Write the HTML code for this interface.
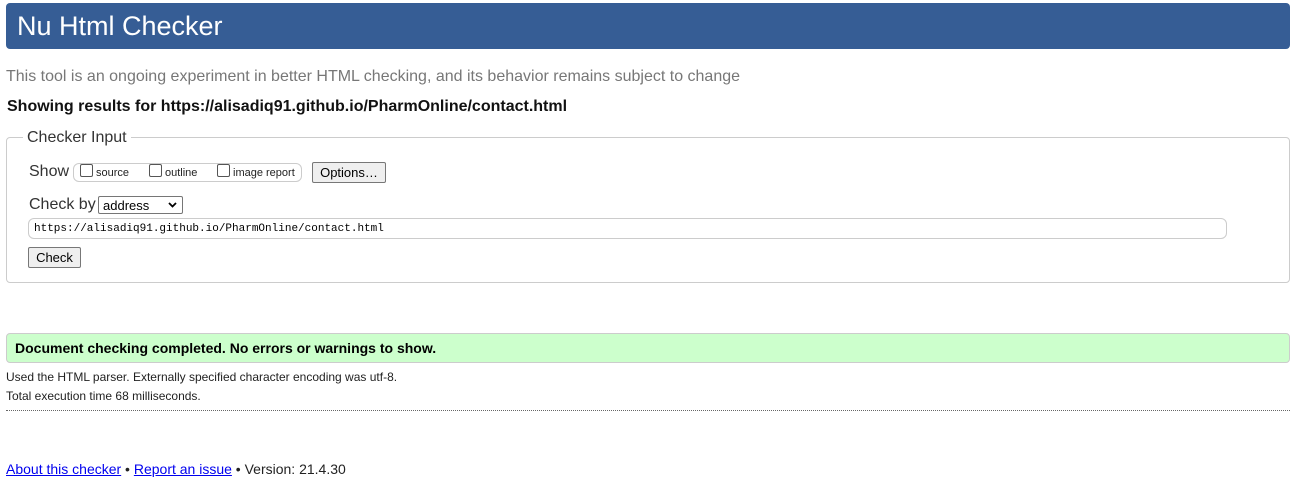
<!DOCTYPE html>
<html><head><meta charset="utf-8"><style>
body{margin:0;width:1300px;height:487px;background:#fff;font-family:"Liberation Sans",Arial,sans-serif;position:relative;overflow:hidden;color:#222}
.a{position:absolute;white-space:nowrap}
.cb{position:absolute;width:11px;height:11px;border:1px solid #555;border-radius:2px;background:#fff}
.btn{position:absolute;border:1px solid #777;border-radius:2px;background:#efefef;font-size:13px;text-align:center;box-sizing:border-box;color:#000}
</style></head><body>
<div class="a" style="left:6px;top:3px;width:1284px;height:46px;background:#365d95;border-radius:4px"></div>
<div class="a" style="left:17px;top:10px;font-size:27px;color:#fff;line-height:32px">Nu Html Checker</div>
<div class="a" style="left:6px;top:68px;font-size:16px;color:#777;line-height:18px">This tool is an ongoing experiment in better HTML checking, and its behavior remains subject to change</div>
<div class="a" style="left:7px;top:98px;font-size:16px;font-weight:bold;color:#111;line-height:18px">Showing results for https://alisadiq91.github.io/PharmOnline/contact.html</div>
<div class="a" style="left:6px;top:137px;width:1282px;height:144px;border:1px solid #ccc;border-radius:4px"></div>
<div class="a" style="left:23px;top:129px;padding:0 4px;background:#fff;font-size:16px;color:#333;line-height:18px">Checker Input</div>
<div class="a" style="left:29px;top:163px;font-size:16px;color:#333;line-height:18px">Show</div>
<div class="a" style="left:73px;top:163px;width:227px;height:17px;border:1px solid #ccc;border-radius:6px"></div>
<div class="cb" style="left:80px;top:164px"></div><div class="a" style="left:96px;top:167px;font-size:11px;line-height:12px">source</div>
<div class="cb" style="left:149px;top:164px"></div><div class="a" style="left:165px;top:167px;font-size:11px;line-height:12px">outline</div>
<div class="cb" style="left:217px;top:164px"></div><div class="a" style="left:233px;top:167px;font-size:11px;line-height:12px">image report</div>
<div class="btn" style="left:312px;top:162px;width:74px;height:21px;line-height:19px">Options…</div>
<div class="a" style="left:29px;top:196px;font-size:16px;color:#333;line-height:18px">Check by</div>
<div class="a" style="left:98px;top:196px;width:85px;border:1px solid #767676;border-radius:2px;box-sizing:border-box;height:18px;font-size:13px;line-height:17px;padding-left:4px;color:#000">address<svg style="position:absolute;right:5px;top:5px" width="9" height="6" viewBox="0 0 9 6"><path d="M1 1L4.5 4.5L8 1" fill="none" stroke="#000" stroke-width="1.8"/></svg></div>
<div class="a" style="left:28px;top:218px;width:1199px;height:21px;border:1px solid #ccc;border-radius:6px;box-sizing:border-box;font-family:'Liberation Mono',monospace;font-size:11px;line-height:21px;padding-left:5px;color:#000">https://alisadiq91.github.io/PharmOnline/contact.html</div>
<div class="btn" style="left:28px;top:247px;width:53px;height:21px;line-height:19px">Check</div>
<div class="a" style="left:6px;top:333px;width:1282px;height:28px;background:#ccffcc;border:1px solid #ccc;border-radius:4px"></div>
<div class="a" style="left:15px;top:340px;font-size:14px;font-weight:bold;color:#000;line-height:16px">Document checking completed. No errors or warnings to show.</div>
<div class="a" style="left:6px;top:370px;font-size:12px;color:#222;line-height:14px">Used the HTML parser. Externally specified character encoding was utf-8.</div>
<div class="a" style="left:6px;top:389px;font-size:12px;color:#222;line-height:14px">Total execution time 68 milliseconds.</div>
<div class="a" style="left:6px;top:410px;width:1284px;border-top:1px dotted #666"></div>
<div class="a" style="left:6px;top:461px;font-size:14px;color:#222;line-height:16px"><span style="color:#00e;text-decoration:underline">About this checker</span> • <span style="color:#00e;text-decoration:underline">Report an issue</span> • Version: 21.4.30</div>
</body></html>
